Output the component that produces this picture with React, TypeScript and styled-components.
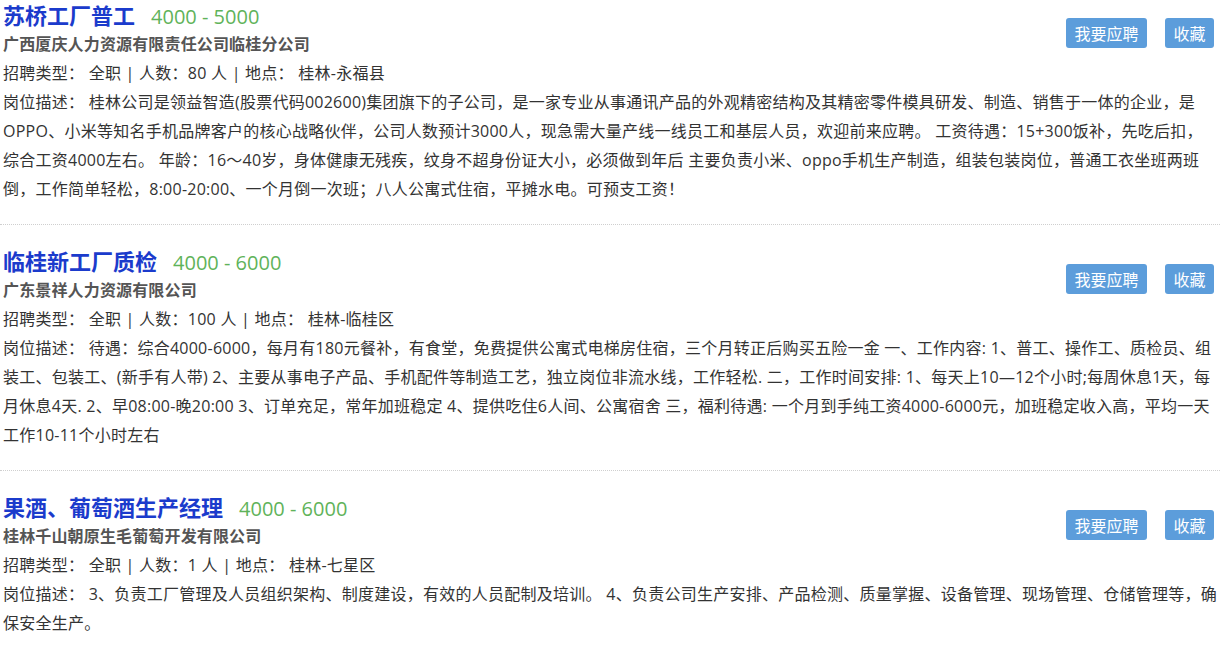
import styled, { createGlobalStyle } from "styled-components";

type Job = {
  title: string;
  salary: string;
  company: string;
  type: string;
  count: number;
  place: string;
  desc: string;
};

const jobs: Job[] = [
  {
    title: "苏桥工厂普工",
    salary: "4000 - 5000",
    company: "广西厦庆人力资源有限责任公司临桂分公司",
    type: "全职",
    count: 80,
    place: "桂林-永福县",
    desc: "桂林公司是领益智造(股票代码002600)集团旗下的子公司，是一家专业从事通讯产品的外观精密结构及其精密零件模具研发、制造、销售于一体的企业，是OPPO、小米等知名手机品牌客户的核心战略伙伴，公司人数预计3000人，现急需大量产线一线员工和基层人员，欢迎前来应聘。 工资待遇：15+300饭补，先吃后扣，综合工资4000左右。 年龄：16～40岁，身体健康无残疾，纹身不超身份证大小，必须做到年后 主要负责小米、oppo手机生产制造，组装包装岗位，普通工衣坐班两班倒，工作简单轻松，8:00-20:00、一个月倒一次班；八人公寓式住宿，平摊水电。可预支工资！",
  },
  {
    title: "临桂新工厂质检",
    salary: "4000 - 6000",
    company: "广东景祥人力资源有限公司",
    type: "全职",
    count: 100,
    place: "桂林-临桂区",
    desc: "待遇：综合4000-6000，每月有180元餐补，有食堂，免费提供公寓式电梯房住宿，三个月转正后购买五险一金 一、工作内容: 1、普工、操作工、质检员、组装工、包装工、(新手有人带) 2、主要从事电子产品、手机配件等制造工艺，独立岗位非流水线，工作轻松. 二，工作时间安排: 1、每天上10—12个小时;每周休息1天，每月休息4天. 2、早08:00-晚20:00 3、订单充足，常年加班稳定 4、提供吃住6人间、公寓宿舍 三，福利待遇: 一个月到手纯工资4000-6000元，加班稳定收入高，平均一天工作10-11个小时左右",
  },
  {
    title: "果酒、葡萄酒生产经理",
    salary: "4000 - 6000",
    company: "桂林千山朝原生毛葡萄开发有限公司",
    type: "全职",
    count: 1,
    place: "桂林-七星区",
    desc: "3、负责工厂管理及人员组织架构、制度建设，有效的人员配制及培训。 4、负责公司生产安排、产品检测、质量掌握、设备管理、现场管理、仓储管理等，确保安全生产。",
  },
];

export default function App() {
  return (
    <>
      <GlobalStyle />
      <List>
        {jobs.map((job) => (
          <Item key={job.title}>
            <Head>
              <Info>
                <TitleRow>
                  <Title>{job.title}</Title>
                  <Salary>{job.salary}</Salary>
                </TitleRow>
                <Company>{job.company}</Company>
                <Line>
                  招聘类型： {job.type} | 人数：{job.count} 人 | 地点： {job.place}
                </Line>
              </Info>
              <Actions>
                <ActionButton>我要应聘</ActionButton>
                <ActionButton>收藏</ActionButton>
              </Actions>
            </Head>
            <Line>岗位描述： {job.desc}</Line>
          </Item>
        ))}
      </List>
    </>
  );
}

const GlobalStyle = createGlobalStyle`
  body {
    margin: 0;
    background: #fff;
    font-family: "Open Sans", "Noto Sans CJK SC", sans-serif;
    color: #333;
  }
`;

const List = styled.div`
  width: 1220px;
`;

const Item = styled.div`
  padding: 21px 2px 20px 3px;
  border-bottom: 1px dotted #cfcfcf;

  &:first-child {
    padding-top: 0;
  }
`;

const Head = styled.div`
  display: flex;
  justify-content: space-between;
  align-items: flex-start;
`;

const Info = styled.div`
  display: flex;
  flex-direction: column;
`;

const TitleRow = styled.div`
  display: flex;
  align-items: baseline;
  gap: 16px;
  height: 30px;
  line-height: 30px;
`;

const Title = styled.span`
  font-size: 22px;
  font-weight: 700;
  color: #1b3bcc;
`;

const Salary = styled.span`
  font-size: 20px;
  color: #5fb35a;
`;

const Company = styled.div`
  font-size: 16px;
  line-height: 29px;
  font-weight: 700;
  letter-spacing: 0.15px;
  color: #555;
`;

const Line = styled.div`
  font-size: 16px;
  line-height: 29px;
  letter-spacing: 0.25px;
  color: #333;
`;

const Actions = styled.div`
  display: flex;
  gap: 18px;
  margin-top: 18px;
  margin-right: 4px;
`;

const ActionButton = styled.button`
  height: 30px;
  padding: 0 8.5px;
  border: none;
  border-radius: 3px;
  background: #5c9ddb;
  color: #fff;
  font-family: "Open Sans", "Noto Sans CJK SC", sans-serif;
  font-size: 16px;
  cursor: pointer;
`;
